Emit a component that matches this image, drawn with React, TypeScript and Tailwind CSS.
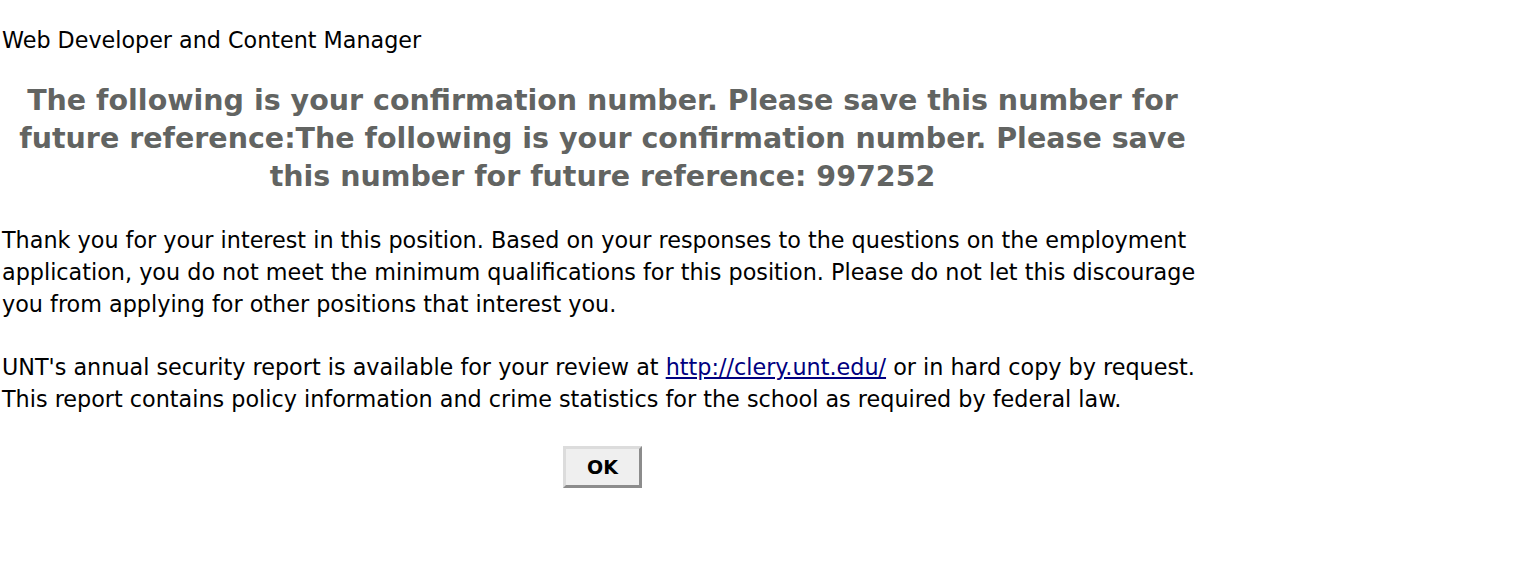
import React from "react";

export default function App() {
  return (
    <div className="min-h-[582px] w-[1516px] bg-white text-black font-['DejaVu_Sans',Verdana,sans-serif]">
      <div className="w-[1203px] pl-[2px]">
        <div className="pt-[24px] text-[22.25px] leading-[32px]">Web Developer and Content Manager</div>
        <h2 className="mt-[26px] text-center text-[28.5px] leading-[38px] font-bold text-[#626462]">
          The following is your confirmation number. Please save this number for future reference:The following is your confirmation number. Please save this number for future reference: 997252
        </h2>
        <p className="mt-[28px] text-[22.3px] leading-[32px]">
          Thank you for your interest in this position. Based on your responses to the questions on the employment application, you do not meet the minimum qualifications for this position. Please do not let this discourage you from applying for other positions that interest you.
        </p>
        <p className="mt-[31px] text-[22.3px] leading-[32px]">
          UNT's annual security report is available for your review at{" "}
          <a href="#" className="text-[#000080] underline">http://clery.unt.edu/</a>{" "}
          or in hard copy by request. This report contains policy information and crime statistics for the school as required by federal law.
        </p>
        <div className="mt-[31px] flex justify-center">
          <button className="w-[79px] h-[42px] bg-[#efefef] border-[3px] border-t-[#dcdcdc] border-l-[#dcdcdc] border-r-[#8c8c8c] border-b-[#8c8c8c] text-[19px] font-bold text-black">
            OK
          </button>
        </div>
      </div>
    </div>
  );
}
